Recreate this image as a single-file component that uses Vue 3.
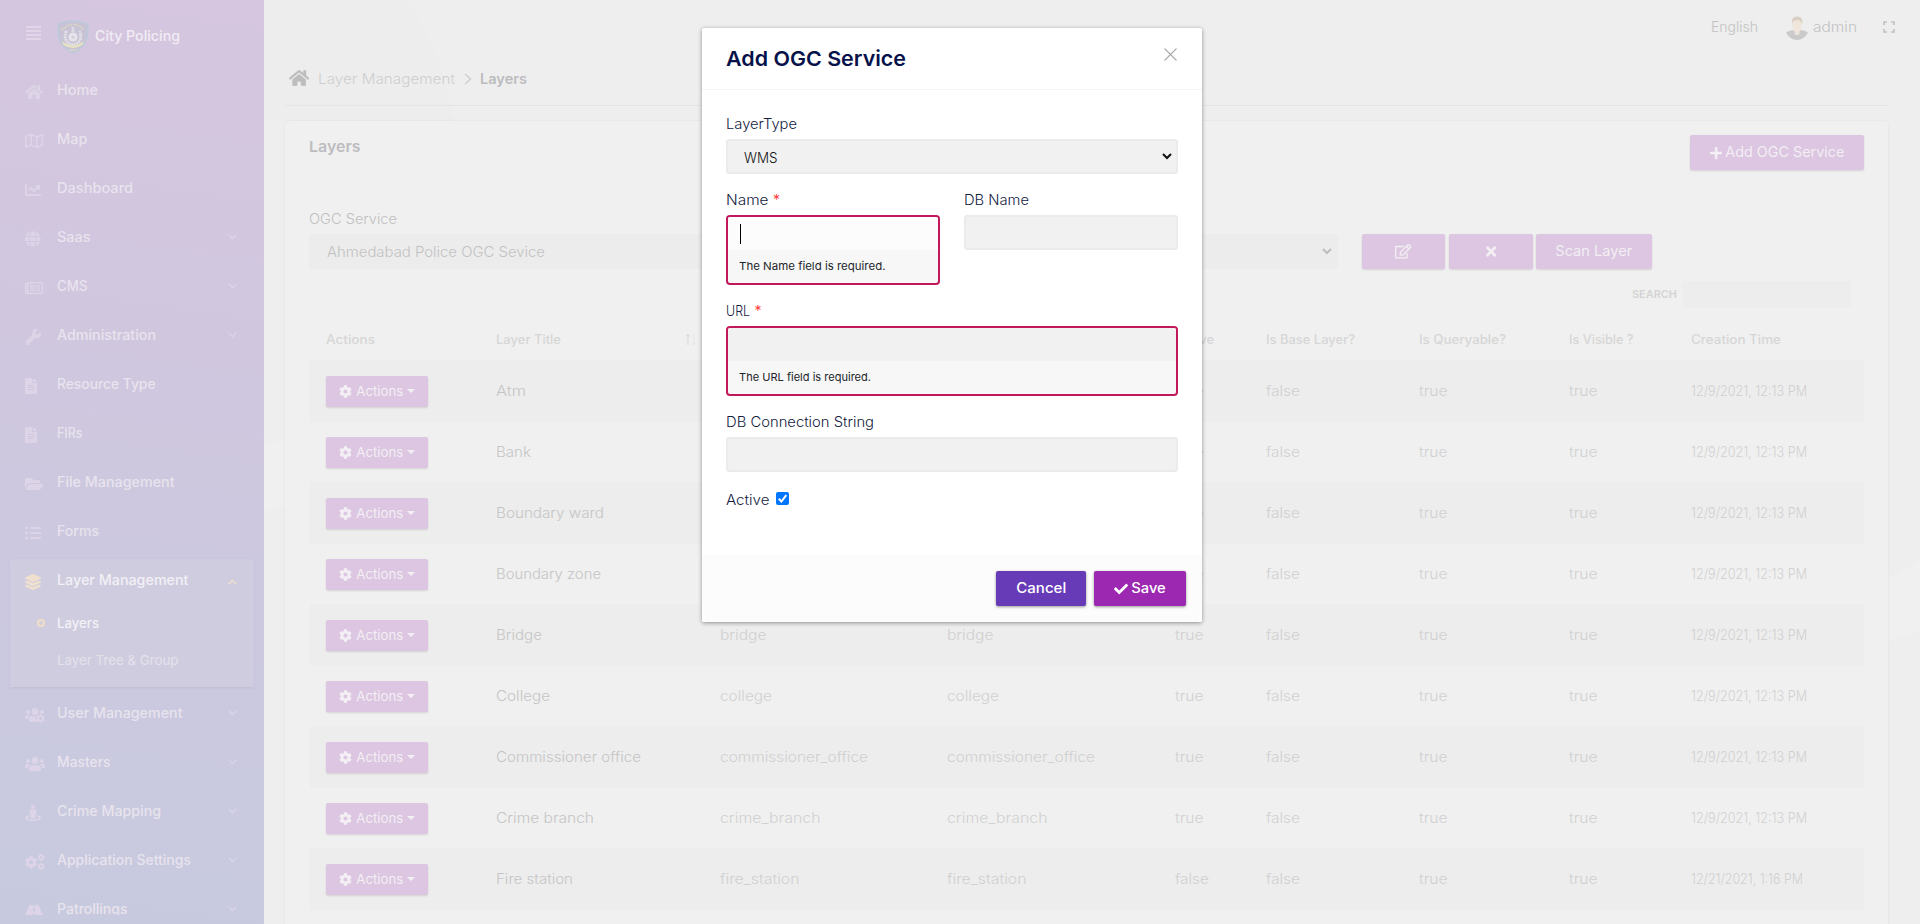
<script setup>
import { h } from 'vue'

const cogPath = 'M487.4 315.7l-42.6-24.6c4.3-23.2 4.3-47 0-70.2l42.6-24.6c4.9-2.8 7.1-8.6 5.5-14-11.1-35.6-30-67.8-54.7-94.6-3.8-4.1-10-5.1-14.8-2.3L380.8 110c-17.9-15.4-38.5-27.3-60.8-35.1V25.8c0-5.6-3.9-10.5-9.4-11.7-36.7-8.2-74.3-7.8-109.2 0-5.5 1.2-9.4 6.1-9.4 11.7V75c-22.2 7.9-42.8 19.8-60.8 35.1L88.7 85.5c-4.9-2.8-11-1.9-14.8 2.3-24.7 26.7-43.6 58.9-54.7 94.6-1.7 5.4.6 11.2 5.5 14L67.3 221c-4.3 23.2-4.3 47 0 70.2l-42.6 24.6c-4.9 2.8-7.1 8.6-5.5 14 11.1 35.6 30 67.8 54.7 94.6 3.8 4.1 10 5.1 14.8 2.3l42.6-24.6c17.9 15.4 38.5 27.3 60.8 35.1v49.2c0 5.6 3.9 10.5 9.4 11.7 36.7 8.2 74.3 7.8 109.2 0 5.5-1.2 9.4-6.1 9.4-11.7v-49.2c22.2-7.9 42.8-19.8 60.8-35.1l42.6 24.6c4.9 2.8 11 1.9 14.8-2.3 24.7-26.7 43.6-58.9 54.7-94.6 1.5-5.5-.7-11.3-5.6-14.1zM256 336c-44.1 0-80-35.9-80-80s35.9-80 80-80 80 35.9 80 80-35.9 80-80 80z'

/* name: [viewBox width, path, path, ...]; a path may be [d, transform] */
const icons = {
  home: [576, 'M280.37 148.26L96 300.11V464a16 16 0 0 0 16 16l112.06-.29a16 16 0 0 0 15.92-16V368a16 16 0 0 1 16-16h64a16 16 0 0 1 16 16v95.64a16 16 0 0 0 16 16.05L464 480a16 16 0 0 0 16-16V300L295.67 148.26a12.19 12.19 0 0 0-15.3 0zM571.6 251.47L488 182.56V44.05a12 12 0 0 0-12-12h-56a12 12 0 0 0-12 12v72.61L318.47 43a48 48 0 0 0-61 0L4.34 251.47a12 12 0 0 0-1.6 16.9l25.5 31A12 12 0 0 0 45.15 301l235.22-193.74a12.19 12.19 0 0 1 15.3 0L530.9 301a12 12 0 0 0 16.9-1.6l25.5-31a12 12 0 0 0-1.7-16.93z'],
  map: [576, 'M560.02 32c-1.96 0-3.98.37-5.96 1.16L384.01 96H384L212 35.28A64.252 64.252 0 0 0 191.76 32c-6.69 0-13.37 1.05-19.81 3.14L20.12 87.95A32.006 32.006 0 0 0 0 117.66v346.32C0 473.17 7.53 480 15.99 480c1.96 0 3.97-.37 5.96-1.16L192 416l172 60.71a63.98 63.98 0 0 0 40.05.15l151.83-52.81A31.996 31.996 0 0 0 576 394.34V48.02c0-9.19-7.53-16.02-15.98-16.02zM224 90.42l128 45.19v285.97l-128-45.19V90.42zM48 418.05V129.07l128-44.53v286.2l-.64.23L48 418.05zm480-35.13l-128 44.53V141.26l.64-.24L528 93.95v288.97z'],
  chart: [512, 'M496 384H64V80c0-8.84-7.16-16-16-16H16C7.16 64 0 71.16 0 80v336c0 17.67 14.33 32 32 32h464c8.84 0 16-7.16 16-16v-32c0-8.84-7.16-16-16-16zM464 96H345.94c-21.38 0-32.09 25.85-16.97 40.97l32.4 32.4L288 242.75l-73.37-73.37c-12.5-12.5-32.76-12.5-45.25 0l-68.69 68.69c-6.25 6.25-6.25 16.38 0 22.63l22.62 22.62c6.25 6.25 16.38 6.25 22.63 0L192 237.25l73.37 73.37c12.5 12.5 32.76 12.5 45.25 0l96-96 32.4 32.4c15.12 15.12 40.97 4.41 40.97-16.97V112c.01-8.84-7.15-16-15.99-16z'],
  globe: [496, 'M336.5 160C322 70.7 287.8 8 248 8s-74 62.7-88.5 152h177zM152 256c0 22.2 1.2 43.5 3.3 64h185.3c2.1-20.5 3.3-41.8 3.3-64s-1.2-43.5-3.3-64H155.3c-2.1 20.5-3.3 41.8-3.3 64zm324.7-96c-28.6-67.9-86.5-120.4-158-141.6 24.4 33.8 41.2 84.7 50 141.6h108zM177.2 18.4C105.8 39.6 47.8 92.1 19.3 160h108c8.7-56.9 25.5-107.8 49.9-141.6zM487.4 192H372.7c2.1 21 3.3 42.5 3.3 64s-1.2 43-3.3 64h114.6c5.5-20.5 8.6-41.8 8.6-64s-3.1-43.5-8.5-64zM120 256c0-21.5 1.2-43 3.3-64H8.6C3.2 212.5 0 233.8 0 256s3.2 43.5 8.6 64h114.6c-2-21-3.2-42.5-3.2-64zm39.5 96c14.5 89.3 48.7 152 88.5 152s74-62.7 88.5-152h-177zm159.3 141.6c71.4-21.2 129.4-73.7 158-141.6h-108c-8.8 56.9-25.6 107.8-50 141.6zM19.3 352c28.6 67.9 86.5 120.4 158 141.6-24.4-33.8-41.2-84.7-50-141.6h-108z'],
  news: [576, 'M552 64H112a48 48 0 0 0-45 32H24a24 24 0 0 0-24 24v272a56 56 0 0 0 56 56h496a24 24 0 0 0 24-24V88a24 24 0 0 0-24-24zM48 392V144h16v248a8 8 0 0 1-16 0zm480 8H111V112h417zM172 280h136a12 12 0 0 0 12-12v-96a12 12 0 0 0-12-12H172a12 12 0 0 0-12 12v96a12 12 0 0 0 12 12zm28-80h80v40h-80zM160 312h160v40H160zM352 312h128v40H352zM352 160h128v40H352zM352 236h128v40H352z'],
  wrench: [512, 'M507.73 109.1c-2.24-9.03-13.54-12.09-20.12-5.51l-74.36 74.36-67.88-11.31-11.31-67.88 74.36-74.36c6.62-6.62 3.43-17.9-5.66-20.16-47.38-11.74-99.55.91-136.58 37.93-39.64 39.64-50.55 97.1-34.05 147.2L18.74 402.76c-24.99 24.99-24.99 65.51 0 90.5 24.99 24.99 65.51 24.99 90.5 0l213.21-213.21c50.12 16.71 107.47 5.68 147.37-34.22 37.07-37.07 49.7-89.32 37.91-136.73zM64 472c-13.25 0-24-10.75-24-24 0-13.26 10.75-24 24-24s24 10.74 24 24c0 13.25-10.75 24-24 24z'],
  file: [384, 'M224 136V0H24C10.7 0 0 10.7 0 24v464c0 13.3 10.7 24 24 24h336c13.3 0 24-10.7 24-24V160H248c-13.2 0-24-10.8-24-24zm64 236c0 6.6-5.4 12-12 12H108c-6.6 0-12-5.4-12-12v-8c0-6.6 5.4-12 12-12h168c6.6 0 12 5.4 12 12v8zm0-64c0 6.6-5.4 12-12 12H108c-6.6 0-12-5.4-12-12v-8c0-6.6 5.4-12 12-12h168c6.6 0 12 5.4 12 12v8zm0-72v8c0 6.6-5.4 12-12 12H108c-6.6 0-12-5.4-12-12v-8c0-6.6 5.4-12 12-12h168c6.6 0 12 5.4 12 12zm96-114.1v6.1H256V0h6.1c6.4 0 12.5 2.5 17 7l97.9 98c4.5 4.5 7 10.6 7 16.9z'],
  folder: [576, 'M572.694 292.093L500.27 416.248A63.997 63.997 0 0 1 444.989 448H45.025c-18.523 0-30.064-20.093-20.731-36.093l72.424-124.155A64 64 0 0 1 152 256h399.964c18.523 0 30.064 20.093 20.73 36.093zM152 224h328v-48c0-26.51-21.49-48-48-48H272l-64-64H48C21.49 64 0 85.49 0 112v278.046l69.077-118.418C86.214 242.25 117.989 224 152 224z'],
  list: [512, 'M48 48a48 48 0 1 0 48 48 48 48 0 0 0-48-48zm0 160a48 48 0 1 0 48 48 48 48 0 0 0-48-48zm0 160a48 48 0 1 0 48 48 48 48 0 0 0-48-48zm448 16H176a16 16 0 0 0-16 16v32a16 16 0 0 0 16 16h320a16 16 0 0 0 16-16v-32a16 16 0 0 0-16-16zm0-320H176a16 16 0 0 0-16 16v32a16 16 0 0 0 16 16h320a16 16 0 0 0 16-16V80a16 16 0 0 0-16-16zm0 160H176a16 16 0 0 0-16 16v32a16 16 0 0 0 16 16h320a16 16 0 0 0 16-16v-32a16 16 0 0 0-16-16z'],
  layers: [512, 'M12.41 148.02l232.94 105.67c6.8 3.09 14.49 3.09 21.29 0l232.94-105.67c16.55-7.51 16.55-32.52 0-40.03L266.65 2.31a25.607 25.607 0 0 0-21.29 0L12.41 107.98c-16.55 7.51-16.55 32.53 0 40.04zm487.18 88.28l-58.09-26.33-161.64 73.27c-7.56 3.43-15.59 5.17-23.86 5.17s-16.29-1.74-23.86-5.17L70.51 209.97l-58.1 26.33c-16.55 7.5-16.55 32.5 0 40l232.94 105.59c6.8 3.08 14.49 3.08 21.29 0L499.59 276.3c16.55-7.5 16.55-32.5 0-40zm0 127.8l-57.87-26.23-161.86 73.37c-7.56 3.43-15.59 5.17-23.86 5.17s-16.29-1.74-23.86-5.17L70.29 337.87 12.41 364.1c-16.55 7.5-16.55 32.5 0 40l232.94 105.59c6.8 3.08 14.49 3.08 21.29 0L499.59 404.1c16.55-7.5 16.55-32.5 0-40z'],
  userscog: [640, 'M96 224a64 64 0 1 0 0-128 64 64 0 0 0 0 128zm224 32a112 112 0 1 0 0-224 112 112 0 0 0 0 224zm224-32a64 64 0 0 0 60-86 64 64 0 1 0-120 44c20 10 40 42 60 42zM173 274.6C161.5 263.1 145.6 256 128 256H64c-35.300 0-64 28.700-64 64v32c0 17.700 14.300 32 32 32h66c6-47 35-87 75-109.400zM350 300c-60 10-100 0-118-12h-9c-63 0-95 52-95 115v29c0 26 22 48 48 48h234c-40-50-75-95-60-180z', [cogPath, 'translate(352 224) scale(.56)']],
  users: [640, 'M96 224c35.3 0 64-28.7 64-64s-28.7-64-64-64-64 28.7-64 64 28.7 64 64 64zm448 0c35.3 0 64-28.7 64-64s-28.7-64-64-64-64 28.7-64 64 28.7 64 64 64zm32 32h-64c-17.6 0-33.5 7.1-45.1 18.6 40.3 22.1 68.9 62 75.1 109.4h66c17.7 0 32-14.3 32-32v-32c0-35.3-28.7-64-64-64zm-256 0c61.9 0 112-50.1 112-112S381.9 32 320 32 208 82.1 208 144s50.1 112 112 112zm76.8 32h-8.3c-20.8 10-43.9 16-68.5 16s-47.6-6-68.5-16h-8.3C179.6 288 128 339.6 128 403.2V432c0 26.5 21.5 48 48 48h288c26.5 0 48-21.5 48-48v-28.8c0-63.6-51.6-115.2-115.2-115.2zm-223.7-13.4C161.5 263.1 145.6 256 128 256H64c-35.3 0-64 28.7-64 64v32c0 17.7 14.3 32 32 32h65.9c6.3-47.4 34.9-87.3 75.2-109.4z'],
  street: [512, 'M256 128a64 64 0 1 0 0-128 64 64 0 0 0 0 128zM192 144h128a40 40 0 0 1 40 40v100c0 14-10 26-24 34v80c0 18-14 32-32 32h-96c-18 0-32-14-32-32v-80c-14-8-24-20-24-34V184a40 40 0 0 1 40-40zM128 330C52 345 0 372 0 408c0 62 115 104 256 104s256-42 256-104c0-36-52-63-128-78v50c40 8 66 18 66 28 0 22-78 56-194 56S62 430 62 408c0-10 26-20 66-28z'],
  cogs: [640, [cogPath, 'translate(-12 60) scale(.8)'], [cogPath, 'translate(398 -8) scale(.46)'], [cogPath, 'translate(398 284) scale(.46)']],
  road: [576, 'M573 402L443 79c-3-9-12-15-22-15H315l3 50h-60l3-50H155c-10 0-19 6-22 15L3 402c-8 20 6 46 29 46h208l8-100h80l8 100h208c23 0 37-26 29-46zM254 170h68l6 100h-80z'],
  cog: [512, cogPath],
  edit: [576, 'M402.3 344.9l32-32c5-5 13.7-1.5 13.7 5.7V464c0 26.5-21.5 48-48 48H48c-26.5 0-48-21.5-48-48V112c0-26.5 21.5-48 48-48h273.5c7.1 0 10.7 8.6 5.7 13.7l-32 32c-1.5 1.5-3.500 2.300-5.700 2.300H48v352h352V350.500c0-2.100.800-4.100 2.300-5.600zm156.600-201.800L296.300 405.700l-90.400 10c-26.200 2.900-48.500-19.200-45.600-45.600l10-90.400L432.900 17.100c22.900-22.900 59.900-22.900 82.700 0l43.200 43.200c22.900 22.900 22.900 60 .1 82.800zM460.1 174L402 115.900 216.200 301.800l-7.300 65.300 65.300-7.300L460.100 174zm64.800-79.700l-43.200-43.200c-4.100-4.100-10.800-4.100-14.800 0L436 82l58.100 58.100 30.900-30.900c4-4.200 4-10.800-.1-14.900z'],
  plus: [448, 'M416 208H272V64c0-17.67-14.33-32-32-32h-32c-17.67 0-32 14.33-32 32v144H32c-17.67 0-32 14.33-32 32v32c0 17.67 14.33 32 32 32h144v144c0 17.67 14.33 32 32 32h32c17.67 0 32-14.33 32-32V304h144c17.67 0 32-14.33 32-32v-32c0-17.67-14.33-32-32-32z'],
  times: [352, 'M242.72 256l100.07-100.07c12.28-12.28 12.28-32.19 0-44.48l-22.24-22.24c-12.28-12.28-32.19-12.28-44.48 0L176 189.28 75.93 89.21c-12.28-12.28-32.19-12.28-44.48 0L9.21 111.45c-12.28 12.28-12.28 32.19 0 44.48L109.28 256 9.21 356.07c-12.28 12.28-12.28 32.19 0 44.48l22.24 22.24c12.28 12.28 32.2 12.28 44.48 0L176 322.72l100.07 100.07c12.28 12.28 32.2 12.28 44.48 0l22.24-22.24c12.28-12.28 12.28-32.19 0-44.48L242.72 256z'],
  check: [512, 'M173.898 439.404l-166.4-166.4c-9.997-9.997-9.997-26.206 0-36.204l36.203-36.204c9.997-9.998 26.207-9.998 36.204 0L192 312.69 432.095 72.596c9.997-9.997 26.207-9.997 36.204 0l36.203 36.204c9.997 9.997 9.997 26.206 0 36.204l-294.4 294.401c-9.998 9.997-26.207 9.997-36.204-.001z']
}

const Icon = (props) => {
  const [w, ...paths] = icons[props.name]
  const size = Number(props.size || 16)
  return h('svg', { viewBox: `0 0 ${w} 512`, width: (size * w) / 512, height: size, fill: 'currentColor' },
    paths.map((p) => (Array.isArray(p) ? h('path', { d: p[0], transform: p[1] }) : h('path', { d: p }))))
}
Icon.props = ['name', 'size']

/* Widens or narrows a label so that it spans the given width */
const vFit = {
  mounted(el, { value }) {
    if (!value) return
    const range = document.createRange()
    range.selectNodeContents(el)
    const natural = range.getBoundingClientRect().width
    el.style.display = 'inline-block'
    el.style.width = `${natural + 0.5}px`
    el.style.flex = 'none'
    el.style.whiteSpace = 'nowrap'
    el.style.marginRight = `${value - natural}px`
    el.style.transformOrigin = '0 50%'
    el.style.transform = `scaleX(${value / natural})`
  }
}

const menuTop = [
  { label: 'Home', icon: 'home', w: 41 },
  { label: 'Map', icon: 'map', w: 30.5 },
  { label: 'Dashboard', icon: 'chart', w: 76 },
  { label: 'Saas', icon: 'globe', w: 33.5, more: true },
  { label: 'CMS', icon: 'news', w: 30.5, more: true },
  { label: 'Administration', icon: 'wrench', w: 99, more: true },
  { label: 'Resource Type', icon: 'file', w: 98.5 },
  { label: 'FIRs', icon: 'file', w: 25.5 },
  { label: 'File Management', icon: 'folder', w: 117.5 },
  { label: 'Forms', icon: 'list', w: 42 }
]
const menuBottom = [
  { label: 'User Management', icon: 'userscog', w: 125.5 },
  { label: 'Masters', icon: 'users', w: 53.5 },
  { label: 'Crime Mapping', icon: 'street', w: 104 },
  { label: 'Application Settings', icon: 'cogs', w: 134 },
  { label: 'Patrollings', icon: 'road', w: 70.5 }
]

const d = '12/9/2021, 12:13 PM'
const rows = [
  { title: 'Atm', w: 30, name: 'atm', nw: 30, active: 'true', date: d },
  { title: 'Bank', w: 35, name: 'bank', nw: 34, active: 'true', date: d },
  { title: 'Boundary ward', w: 108, name: 'boundary_ward', nw: 112, active: 'true', date: d },
  { title: 'Boundary zone', w: 105, name: 'boundary_zone', nw: 109, active: 'true', date: d },
  { title: 'Bridge', w: 46, name: 'bridge', nw: 46.5, active: 'true', date: d },
  { title: 'College', w: 54, name: 'college', nw: 52, active: 'true', date: d },
  { title: 'Commissioner office', w: 145, name: 'commissioner_office', nw: 148, active: 'true', date: d },
  { title: 'Crime branch', w: 98, name: 'crime_branch', nw: 100.5, active: 'true', date: d },
  { title: 'Fire station', w: 77, name: 'fire_station', nw: 79.5, active: 'false', date: '12/21/2021, 1:16 PM' }
]
</script>

<template>
  <div class="page">
    <aside class="sidebar">
      <div class="brand">
        <svg class="burger" width="15" height="15" viewBox="0 0 15 15"><path d="M0 1h15M0 5h15M0 9h15M0 13h15" stroke="#e5dcea" stroke-width="1.5" /></svg>
        <svg class="crest" width="32" height="34" viewBox="0 0 32 34">
          <path d="M16 1C10 1 5 2 1.200 4.500 0 18 4 28 16 33 28 28 32 18 30.800 4.500 27 2 22 1 16 1z" fill="#c8c2d6" stroke="#bccbdc" stroke-width="1.500" />
          <path d="M5 10Q16-1 27 10" fill="none" stroke="#dad6c2" stroke-width="2" stroke-dasharray="1.500 1" />
          <path d="M9.500 11C6 18 10 24 16 25 22 24 26 18 22.500 11" fill="none" stroke="#e3e1e7" stroke-width="3" stroke-dasharray="2 .7" />
          <circle cx="16" cy="17" r="4.600" fill="#e6e4ea" /><circle cx="16" cy="17" r="1.500" fill="#d0ccda" />
          <path d="M14.500 7h3v5h-3z" fill="#dcdae2" />
          <path d="M5 21q11 9 22 0l-1.500 4q-9.500 6-19 0z" fill="#e8e3bf" />
          <path d="M12 30h8" stroke="#dbd7c6" stroke-width="2" stroke-dasharray="1.500 .8" />
        </svg>
        <span v-fit="85" class="brand-name">City Policing</span>
      </div>
      <nav class="menu">
        <div v-for="m in menuTop" :key="m.label" class="item">
          <span class="ico"><Icon :name="m.icon" size="16" /></span>
          <span v-fit="m.w" class="t">{{ m.label }}</span>
          <svg v-if="m.more" class="caret" width="9" height="6" viewBox="0 0 9 6"><path d="M.7 .8l3.800 3.800L8.300 .8" /></svg>
        </div>
        <div class="group">
          <div class="item current">
            <span class="ico"><Icon name="layers" size="16" /></span>
            <span v-fit="131.5" class="t">Layer Management</span>
            <svg class="caret up" width="9" height="6" viewBox="0 0 9 6"><path d="M.7 5.200l3.800-3.800 3.800 3.800" /></svg>
          </div>
          <div class="sub on"><i class="ring"></i><span v-fit="42" class="t">Layers</span></div>
          <div class="sub"><span v-fit="121.5" class="t">Layer Tree &amp; Group</span></div>
        </div>
        <div v-for="m in menuBottom" :key="m.label" class="item">
          <span class="ico"><Icon :name="m.icon" size="16" /></span>
          <span v-fit="m.w" class="t">{{ m.label }}</span>
          <svg class="caret" width="9" height="6" viewBox="0 0 9 6"><path d="M.7 .8l3.800 3.800L8.300 .8" /></svg>
        </div>
      </nav>
    </aside>

    <main class="main">
      <svg class="waves" width="1656" height="924" viewBox="0 0 1656 924">
        <path d="M0 0H142Q178 50 190 121H0z" fill="#ededed" />
        <path d="M190 0q14 60 24 121h-24Q178 50 142 0z" fill="#eeeeee" />
        <path d="M0 446l21-8v68l-21 6zM1656 558q-15 14-32 20v64l32-12z" fill="#f0f0f0" />
      </svg>
      <header class="topbar">
        <span v-fit="47" class="t">English</span>
        <span class="user">
          <svg width="22" height="24" viewBox="0 0 22 24">
            <path d="M0 16.500Q3 14 8 14h6q5 0 8 2.500Q18 24 11 24T0 16.500z" fill="#cacaca" />
            <path d="M8.500 13h5v5q-2.500 2.500-5 0z" fill="#ebe3d9" />
            <ellipse cx="11" cy="9.500" rx="4.600" ry="7" fill="#efe5da" />
            <path d="M6 8Q5 1 11 .6 17.500 .6 16.200 8 14 3.500 10.500 4 7 4.500 6 8z" fill="#d9d0c3" />
          </svg>
          <span v-fit="44" class="t">admin</span>
        </span>
        <svg class="expand" width="12" height="12" viewBox="0 0 12 12"><path d="M1 4V1h3M8 1h3v3M11 8v3H8M4 11H1V8" fill="none" stroke="#c4c4c4" stroke-width="1.700" /></svg>
      </header>

      <div class="crumbs">
        <Icon name="home" size="18" />
        <span v-fit="137" class="crumb t">Layer Management</span>
        <svg class="sep" width="8" height="12" viewBox="0 0 8 12"><path d="M1 1l5.500 5L1 11" fill="none" stroke="#d0d0d0" stroke-width="1.600" /></svg>
        <span v-fit="47" class="here t">Layers</span>
      </div>

      <section class="card">
        <div class="card-head">
          <h3 v-fit="51.5">Layers</h3>
          <button class="btn add"><Icon name="plus" size="14" /><span v-fit="119" class="t">Add OGC Service</span></button>
        </div>
        <div class="flabel"><span v-fit="88">OGC Service</span></div>
        <div class="filters">
          <div class="service"><span v-fit="218" class="t">Ahmedabad Police OGC Sevice</span>
            <svg width="10" height="7" viewBox="0 0 10 7"><path d="M1 1l4 4 4-4" fill="none" stroke="#bdbdbd" stroke-width="2" /></svg>
          </div>
          <button class="btn b-edit"><Icon name="edit" size="14.500" /></button>
          <button class="btn b-x"><Icon name="times" size="15" /></button>
          <button class="btn b-scan"><span v-fit="77" class="t">Scan Layer</span></button>
        </div>
        <div class="search"><span v-fit="45" class="t">SEARCH</span><div class="search-box"></div></div>

        <div class="row thead">
          <span><b v-fit="49">Actions</b></span>
          <span><b v-fit="65">Layer Title</b>
            <svg class="sort" width="12" height="13" viewBox="0 0 12 13"><path d="M3 1v11M1 3.500l2-2 2 2" fill="none" stroke="#dbd3db" /><path d="M9 1v11M7 9.500l2 2 2-2" fill="none" stroke="#e6e6e6" /></svg>
          </span>
          <span><b>Layer Name</b></span>
          <span><b>Style Name</b></span>
          <span><b v-fit="39">Active</b></span>
          <span><b v-fit="89">Is Base Layer?</b></span>
          <span><b v-fit="87">Is Queryable?</b></span>
          <span><b v-fit="64.5">Is Visible ?</b></span>
          <span><b v-fit="90">Creation Time</b></span>
        </div>
        <div v-for="(r, i) in rows" :key="r.title" class="row" :class="{ odd: i % 2 === 0 }">
          <span><button class="btn act"><Icon name="cog" size="13" /><span v-fit="47" class="t">Actions</span><i class="tri"></i></button></span>
          <span class="strong"><em v-fit="r.w">{{ r.title }}</em></span>
          <span><em v-fit="r.nw">{{ r.name }}</em></span>
          <span><em v-fit="r.nw">{{ r.name }}</em></span>
          <span><em v-fit="r.active === 'true' ? 28.5 : 34">{{ r.active }}</em></span>
          <span><em v-fit="34">false</em></span>
          <span><em v-fit="28.5">true</em></span>
          <span><em v-fit="28.5">true</em></span>
          <span><em v-fit="r.date === d ? 116 : 112">{{ r.date }}</em></span>
        </div>
      </section>
    </main>

    <div class="modal">
      <div class="m-head">
        <h2 v-fit="180">Add OGC Service</h2>
        <svg width="13" height="13" viewBox="0 0 13 13"><path d="M.5 .5l12 12M12.500 .5l-12 12" stroke="#aaa" stroke-width="1.100" /></svg>
      </div>
      <div class="m-body">
        <label class="lab"><span v-fit="71">LayerType</span></label>
        <div class="field select"><span v-fit="33.5" class="t">WMS</span>
          <svg width="10" height="7" viewBox="0 0 10 7"><path d="M1 1l4 4 4-4" fill="none" stroke="#111" stroke-width="2" /></svg>
        </div>
        <div class="pair">
          <div>
            <label class="lab"><span v-fit="42.5">Name</span><i>*</i></label>
            <div class="invalid">
              <div class="entry focus"><u class="cursor"></u></div>
              <div class="help"><span v-fit="146.5">The Name field is required.</span></div>
            </div>
          </div>
          <div>
            <label class="lab"><span v-fit="65">DB Name</span></label>
            <div class="field"></div>
          </div>
        </div>
        <label class="lab"><span v-fit="24">URL</span><i>*</i></label>
        <div class="invalid">
          <div class="entry"></div>
          <div class="help"><span v-fit="132">The URL field is required.</span></div>
        </div>
        <label class="lab"><span v-fit="148">DB Connection String</span></label>
        <div class="field"></div>
        <div class="active">
          <span v-fit="43.5" class="t">Active</span>
          <span class="box"><svg width="13" height="13" viewBox="0 0 13 13"><path d="M2.800 6.800l2.600 2.700 4.900-6.300" fill="none" stroke="#fff" stroke-width="2" /></svg></span>
        </div>
      </div>
      <div class="m-foot">
        <button class="cancel"><span v-fit="50" class="t">Cancel</span></button>
        <button class="save"><Icon name="check" size="14" /><span v-fit="34.5" class="t">Save</span></button>
      </div>
    </div>
  </div>
</template>

<style>
html, body { margin: 0; overflow: hidden; background: #eeeeee; }
</style>

<style scoped>
* { box-sizing: border-box; }
.page {
  position: relative;
  display: flex;
  width: 1920px;
  height: 924px;
  overflow: hidden;
  font-family: Inter, "Open Sans", sans-serif;
  font-size: 14px;
  font-weight: 300;
  background: #eeeeee;
}
svg { display: block; flex: none; }
button { border: 0; margin: 0; padding: 0; font: inherit; }
em, i, u, b { font-style: normal; text-decoration: none; font-weight: inherit; }
span { white-space: nowrap; }
.t { padding-bottom: 2px; }

.sidebar { width: 264px; flex: none; background: linear-gradient(188deg, #d6c6df 0%, #d3c6df 18%, #cdc8df 55%, #c7cadf 100%); }
.brand { display: flex; align-items: center; height: 66px; padding: 4px 0 0 26px; }
.crest { margin: 3px 0 0 16px; }
.burger { margin-top: -4px; }
.brand-name { margin-left: 6px; margin-top: 1px; color: #f1edf4; font-size: 14.500px; font-weight: 500; }
.menu { height: 849px; overflow: hidden; }
.item { display: flex; align-items: center; height: 49px; padding: 0 27px 0 25px; color: #e8e3ed; font-weight: 500; }
.ico { width: 32px; flex: none; color: #ddd4e7; padding-top: 2px; }
.caret { margin-left: auto; margin-top: -1px; }
.caret path { fill: none; stroke: #d9d3e5; stroke-width: 1.500; }
.item .t + .caret { position: relative; }
.caret.up { margin-top: 3px; }
.caret.up path { stroke: #eadfd0; }
.group { height: 128px; margin: 3px 10px 2px; background: #cfccdf; box-shadow: 0 1px 2px rgba(120, 110, 160, .12); }
.group .item { height: 43px; padding: 0 17px 0 15px; }
.item.current { color: #f2f0f5; }
.current .ico { color: #efdfcf; }
.sub { display: flex; align-items: center; height: 37px; padding-left: 47px; color: #e5e1eb; font-size: 13.500px; font-weight: 400; }
.sub.on { padding-left: 27px; color: #f3f1f6; font-weight: 500; height: 43px; }
.sub + .sub { height: 32px; }
.ring { width: 8px; height: 8px; margin: -2px 12px 0 0; border: 2px solid #f0dfc6; border-radius: 50%; }

.main { position: relative; flex: 1; padding: 0 32px 0 21px; }
.waves { position: absolute; left: 0; top: 0; }
.topbar { position: relative; display: flex; align-items: center; justify-content: flex-end; height: 54px; margin-right: -7px; color: #c3c3c3; }
.user { display: flex; align-items: center; gap: 5px; margin: 0 26px 0 27px; }
.user svg { margin-top: 2px; }
.crumbs { position: relative; display: flex; align-items: center; height: 52px; padding-left: 4px; border-bottom: 1px solid #e4e4e4; color: #bdbdbd; font-size: 14px; }
.crumbs svg { margin-top: -4px; }
.crumbs .sep { margin-top: -2px; margin-left: 8px; }
.crumb { margin-left: 9px; color: #cfcfcf; font-size: 14.500px; }
.here { margin-left: 8px; color: #bcbcbf; font-weight: 600; }
.card { position: relative; height: 820px; margin-top: 15px; padding: 0 24px; background: #f0f0f0; border-radius: 4px 4px 0 0; box-shadow: 0 0 3px rgba(0, 0, 0, .06); }
.card-head { display: flex; justify-content: space-between; height: 83px; padding-top: 14px; }
.card-head h3 { margin: 0; line-height: 23px; font-size: 15px; font-weight: 600; color: #bdbdc0; }
.btn { display: flex; align-items: center; justify-content: center; height: 35px; background: #dcc6e1; color: #f3eff4; border-radius: 2px; box-shadow: 0 1px 2px rgba(0, 0, 0, .12); font-weight: 400; }
.add { width: 174px; gap: 3px; }
.flabel { height: 30px; line-height: 30px; color: #c0c0c0; }
.filters { display: flex; }
.service { display: flex; align-items: center; justify-content: space-between; width: 1029px; height: 35px; padding: 2px 6px 0 18px; border-radius: 3px; background: #ececec; color: #c2c2c2; margin-right: 24px; }
.service svg { margin-top: -2px; }
.b-edit { width: 83px; margin-right: 4px; }
.b-x { width: 84px; margin-right: 3px; }
.b-scan { width: 116px; }
.search { display: flex; align-items: center; justify-content: flex-end; height: 27px; margin-top: 12px; padding-right: 13px; color: #d4d4d4; font-size: 11px; font-weight: 600; }
.search-box { width: 169px; height: 27px; margin-left: 5px; border-radius: 3px; background: #ededed; }
.row { display: grid; grid-template-columns: 170px 224px 227px 228px 91px 153px 150px 122px auto; align-items: center; height: 61px; padding: 2px 0 0 16px; margin-left: 1px; color: #d0d0d0; }
.row > span { display: flex; align-items: center; }
.row em { padding-bottom: 2px; }
.row .strong { color: #c5c5c5; }
.row.odd { background: #ededed; box-shadow: 0 1px 0 #ededed; }
.thead { height: 52px; padding-top: 11px; color: #d6d6d6; font-size: 12.500px; font-weight: 500; }
.sort { margin-left: auto; margin-right: 23px; }
.act { width: 102px; height: 31px; gap: 4px; font-size: 13px; }
.tri { width: 0; height: 0; margin: -2px 0 0 -1px; border: 4px solid transparent; border-top-color: #f3eff4; border-bottom: 0; }

.modal { position: absolute; left: 702px; top: 28px; width: 500px; height: 594px; background: #fff; border-radius: 2px; box-shadow: 0 1px 4px rgba(0, 0, 0, .4); color: #14213f; overflow: hidden; }
.m-head { display: flex; justify-content: space-between; height: 62px; padding: 21px 25px 0 24px; border-bottom: 1px solid #f5f5f5; }
.m-head h2 { margin: 0; line-height: 20px; height: 20px; font-size: 20.500px; font-weight: 600; color: #07124a; white-space: nowrap; }
.m-head svg { margin-top: -1px; }
.m-body { height: 465px; padding: 20px 24px 0; }
.lab { display: flex; height: 29px; line-height: 27px; }
.lab i { color: #ff3b3b; font-weight: 400; margin-left: 4px; }
.field { height: 35px; margin-bottom: 12px; border: 2px solid #ebebeb; border-radius: 3px; background: #f1f1f1; }
.select { display: flex; align-items: center; justify-content: space-between; padding: 3px 4px 0 16px; color: #111; }
.select svg { margin-top: -4px; }
.pair { display: flex; gap: 24px; }
.pair > div { flex: 1; }
.invalid { height: 70px; margin-bottom: 12px; border: 2px solid #c2185b; border-radius: 4px; background: #f7f7f7; overflow: hidden; }
.entry { display: flex; align-items: center; height: 33px; background: #f1f1f1; }
.focus { background: #fcfcfc; }
.cursor { width: 1px; height: 20px; margin-left: 12px; background: #000; }
.help { padding-left: 11px; line-height: 33px; font-size: 11px; font-weight: 400; color: #212529; }
.active { display: flex; align-items: center; height: 32px; }
.box { width: 13px; height: 13px; margin: -3px 0 0 6px; border-radius: 2px; background: #0075ff; }
.m-foot { display: flex; justify-content: flex-end; gap: 8px; height: 67px; padding: 16px 16px 0; background: #fcfcfc; }
.m-foot button { display: flex; align-items: center; justify-content: center; gap: 3px; height: 35px; border-radius: 2px; color: #fff; font-weight: 500; box-shadow: 0 1px 3px rgba(0, 0, 0, .4); }
.m-foot .cancel { width: 90px; background: #673ab7; }
.m-foot .save { width: 92px; background: #9c27b0; }
</style>
